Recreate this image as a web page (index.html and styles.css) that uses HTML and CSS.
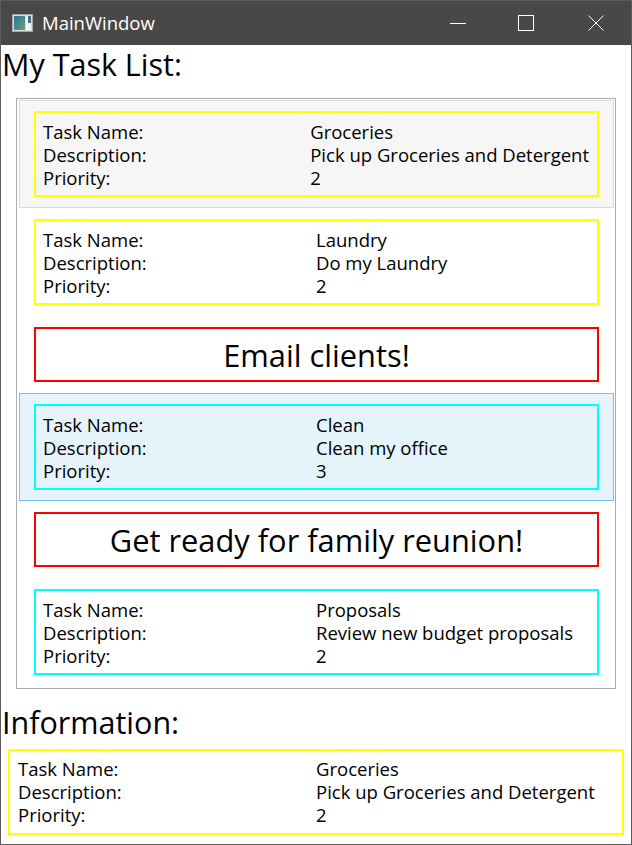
FILE: index.html
```html
<!DOCTYPE html>
<html><head>
<title>MainWindow</title>
<link rel="stylesheet" href="styles.css">
<meta charset="UTF-8">
</head>
<body>
<div class="window">

<div class="titlebar">
  <svg class="appicon" width="21" height="18" viewBox="0 0 21 18">
    <defs>
      <linearGradient id="g" x1="0" y1="0" x2="1" y2="1">
        <stop offset="0" stop-color="#2f6f9e"/>
        <stop offset="1" stop-color="#63a86f"/>
      </linearGradient>
    </defs>
    <rect x="0.5" y="0.5" width="20" height="17" fill="#dcdcdc" stroke="#a8a8a8"/>
    <rect x="2" y="2" width="11" height="14" fill="url(#g)"/>
    <rect x="14" y="2" width="5" height="14" fill="#f4f4f4"/>
    <rect x="16" y="2" width="3" height="7" fill="#3d6f8e"/>
  </svg>
  <span class="title">MainWindow</span>
  <div class="controls">
    <div class="btn btn-min"><svg width="16" height="16"><path d="M0 8.5H16" stroke="#fff"/></svg></div>
    <div class="btn btn-max"><svg width="16" height="16"><rect x="0.5" y="0.5" width="15" height="15" fill="none" stroke="#fff"/></svg></div>
    <div class="btn btn-close"><svg width="16" height="16"><path d="M0.5 0.5L15.5 15.5M15.5 0.5L0.5 15.5" stroke="#fff"/></svg></div>
  </div>
</div>

<div class="client">
  <h1 class="heading">My Task List:</h1>

  <div class="listbox">
    <div class="item item-inactive">
      <div class="task task-yellow">
        <span>Task Name:</span><span>Groceries</span>
        <span>Description:</span><span>Pick up Groceries and Detergent</span>
        <span>Priority:</span><span>2</span>
      </div>
    </div>
    <div class="item">
      <div class="task task-yellow">
        <span>Task Name:</span><span>Laundry</span>
        <span>Description:</span><span>Do my Laundry</span>
        <span>Priority:</span><span>2</span>
      </div>
    </div>
    <div class="item">
      <div class="home">Email clients!</div>
    </div>
    <div class="item item-hover">
      <div class="task task-cyan">
        <span>Task Name:</span><span>Clean</span>
        <span>Description:</span><span>Clean my office</span>
        <span>Priority:</span><span>3</span>
      </div>
    </div>
    <div class="item">
      <div class="home">Get ready for family reunion!</div>
    </div>
    <div class="item">
      <div class="task task-cyan">
        <span>Task Name:</span><span>Proposals</span>
        <span>Description:</span><span>Review new budget proposals</span>
        <span>Priority:</span><span>2</span>
      </div>
    </div>
  </div>

  <h1 class="heading heading-info">Information:</h1>

  <div class="task task-yellow info">
    <span>Task Name:</span><span>Groceries</span>
    <span>Description:</span><span>Pick up Groceries and Detergent</span>
    <span>Priority:</span><span>2</span>
  </div>
</div>

</div>
</body></html>
```

FILE: styles.css
```css
body {
    margin: 0;
    font-family: "Open Sans", sans-serif;
    color: #000;
}

.window {
    width: 630px;
    height: 843px;
    border: 1px solid #5c5c5c;
    background: #fff;
    display: flex;
    flex-direction: column;
}

/* title bar */
.titlebar {
    height: 44px;
    background: #4a4846;
    display: flex;
    align-items: center;
    color: #fff;
}
.appicon { margin-left: 11px; margin-right: 9px; margin-top: -1px; }
.title { font-size: 18.5px; line-height: 24px; }
.controls { margin-left: auto; display: flex; height: 44px; }
.btn { display: flex; align-items: center; justify-content: center; }
.btn-min   { width: 66px; }
.btn-max   { width: 70px; }
.btn-close { width: 70px; }

/* client area */
.client { flex: 1; }

.heading {
    margin: 0;
    padding: 1px 0 0 1px;
    font-size: 30.5px;
    font-weight: normal;
    line-height: 36px;
}
.heading-info { margin-top: 14px; }

.listbox {
    margin: 16px 15px 0;
    border: 1px solid #abadb3;
    padding: 1px 1px 2px 2px;
}

.item {
    border: 1px solid transparent;
    padding: 10px 14px;
}
.item-inactive { background: #f6f6f6; border-color: #dadada; }
.item-hover    { background: #e5f3fb; border-color: #70c0e7; }

.task {
    display: grid;
    grid-template-columns: 1fr 1fr;
    border: 2px solid;
    padding: 7px 8px 6px 7px;
    font-size: 18.5px;
    line-height: 23px;
    white-space: nowrap;
}
.task-yellow { border-color: #ffff00; }
.task-cyan   { border-color: #00ffff; }

.home {
    height: 51px;
    border: 2px solid #ff0000;
    display: flex;
    align-items: center;
    justify-content: center;
    font-size: 30.8px;
}

.info {
    margin: 9px 7px 0;
    padding: 6px 8px 7px 8px;
}
```
